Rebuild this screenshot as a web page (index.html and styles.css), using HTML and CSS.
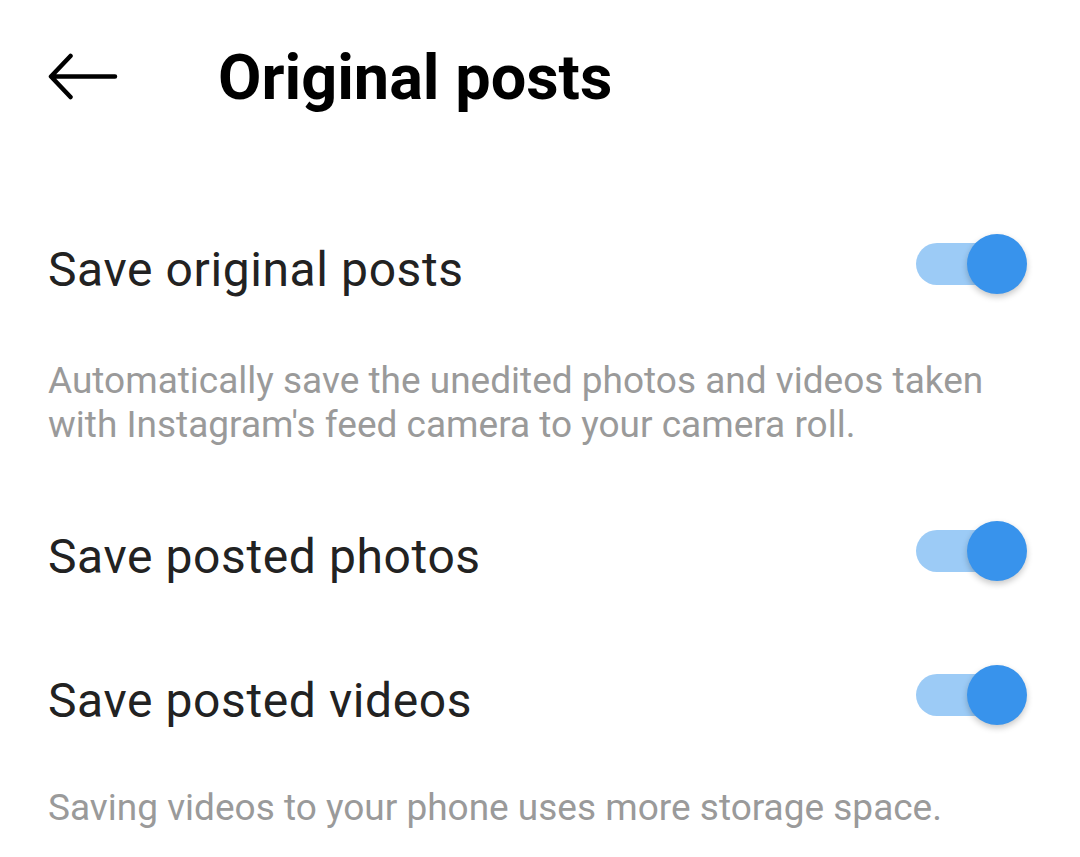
FILE: index.html
```html
<!DOCTYPE html>
<html lang="en">
<head>
<meta charset="utf-8">
<title>Original posts</title>
<link rel="stylesheet" href="styles.css">
</head>
<body>
<div class="screen">
  <header class="topbar">
    <svg class="back" width="70" height="50" viewBox="0 0 70 50" aria-hidden="true">
      <path d="M67 24.5H3.5M22.5 4L3 24.5L22.5 45" fill="none" stroke="#000" stroke-width="4.5" stroke-linecap="round" stroke-linejoin="round"/>
    </svg>
    <h1 class="title">Original posts</h1>
  </header>

  <section class="setting first">
    <div class="row">
      <span class="label">Save original posts</span>
      <span class="switch on"><span class="track"></span><span class="knob"></span></span>
    </div>
    <p class="desc">Automatically save the unedited photos and videos taken with Instagram's feed camera to your camera roll.</p>
  </section>

  <section class="setting">
    <div class="row">
      <span class="label">Save posted photos</span>
      <span class="switch on"><span class="track"></span><span class="knob"></span></span>
    </div>
  </section>

  <section class="setting">
    <div class="row">
      <span class="label">Save posted videos</span>
      <span class="switch on"><span class="track"></span><span class="knob"></span></span>
    </div>
    <p class="desc">Saving videos to your phone uses more storage space.</p>
  </section>
</div>
</body>
</html>
```

FILE: styles.css
```css
* { box-sizing: border-box; }
html, body { margin: 0; padding: 0; background: #fff; }
body { font-family: Roboto, "Noto Sans", sans-serif; color: #1f1f1f; }

.screen { width: 1080px; height: 857px; overflow: hidden; padding: 0 53px 0 48px; }

.topbar { display: flex; align-items: center; height: 154px; }
.back { display: block; flex: none; }
.title { margin: 0 0 0 100px; font-size: 63px; font-weight: 700; color: #000; letter-spacing: 0; line-height: 1; }

.setting.first { margin-top: 80px; }
.row { display: flex; align-items: center; justify-content: space-between; height: 60px; }
.label { font-size: 48px; line-height: 60px; padding-top: 12px; color: #222; letter-spacing: 0.6px; }

.desc { margin: 0; font-size: 37px; line-height: 44px; color: #9a9a9a; letter-spacing: 0; }
.setting.first .desc { margin-top: 65px; }
.setting.first + .setting { margin-top: 74px; }
.setting + .setting + .setting { margin-top: 84px; }
.setting:last-child .desc { margin-top: 61px; }

.switch { position: relative; display: block; width: 111px; height: 60px; flex: none; }
.switch .track { position: absolute; left: 0; top: 9px; width: 96px; height: 42px; border-radius: 21px; background: #9ccbf6; }
.switch .knob { position: absolute; right: 0; top: 0; width: 60px; height: 60px; border-radius: 50%; background: #3893ec; box-shadow: 0 3px 6px rgba(0,0,0,0.22); }
```
